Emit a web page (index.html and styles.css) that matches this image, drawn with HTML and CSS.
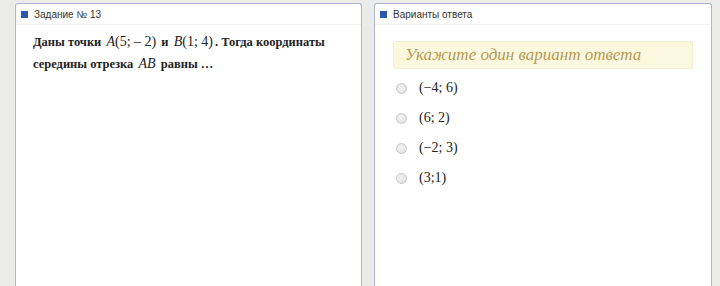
FILE: index.html
```html
<!DOCTYPE html>
<html lang="ru">
<head>
    <meta charset="UTF-8">
    <title>Задание № 13</title>
    <link rel="stylesheet" href="styles.css">
</head>
<body>
    <div class="page">
        <div class="panel panel-task">
            <div class="panel-head"><span class="marker"></span>Задание № 13</div>
            <div class="task-text">
                <p>Даны точки <span class="math"><i>A</i>(5;&nbsp;–&nbsp;2)</span> и <span class="math"><i>B</i>(1;&nbsp;4)</span>. Тогда координаты</p>
                <p>середины отрезка <span class="math"><i>AB</i></span> равны …</p>
            </div>
        </div>
        <div class="panel panel-answers">
            <div class="panel-head"><span class="marker"></span>Варианты ответа</div>
            <div class="answers">
                <div class="hint">Укажите один вариант ответа</div>
                <label class="option"><span class="radio"></span>(−4; 6)</label>
                <label class="option"><span class="radio"></span>(6; 2)</label>
                <label class="option"><span class="radio"></span>(−2; 3)</label>
                <label class="option"><span class="radio"></span>(3;1)</label>
            </div>
        </div>
    </div>
</body>
</html>
```

FILE: styles.css
```css
body {
    margin: 0;
    padding: 0;
    background-color: #ebebea;
    font-family: "Liberation Sans", Arial, sans-serif;
    overflow: hidden;
}

.page {
    display: flex;
    gap: 12px;
    padding: 3px 0 0 15px;
    height: 300px;
}

.panel {
    background-color: #fff;
    border: 1px solid #aeb4d4;
    border-bottom: none;
    border-radius: 3px 3px 0 0;
}

.panel-task {
    width: 345px;
}

.panel-answers {
    width: 336px;
}

.panel-head {
    display: flex;
    align-items: center;
    height: 20px;
    padding-left: 5px;
    font-size: 10px;
    color: #333;
    border-bottom: 1px solid #f1f1f1;
}

.marker {
    width: 7px;
    height: 7px;
    background-color: #2a5aaf;
    margin-right: 6px;
}

.task-text {
    padding: 6px 0 0 17px;
    font-family: "Liberation Serif", "Times New Roman", serif;
    font-weight: bold;
    font-size: 12.5px;
    color: #222;
}

.task-text p {
    margin: 0;
    line-height: 21px;
}

.math {
    font-weight: normal;
    font-size: 14px;
    margin: 0 2px;
}

.answers {
    padding: 16px 18px 0 18px;
    font-family: "Liberation Serif", "Times New Roman", serif;
}

.hint {
    background-color: #fbf8df;
    border: 1px solid #f4efce;
    border-radius: 2px;
    height: 26px;
    line-height: 26px;
    padding-left: 11px;
    font-style: italic;
    font-size: 17px;
    color: #b59a52;
    margin-bottom: 4px;
}

.option {
    display: flex;
    align-items: center;
    height: 30px;
    font-size: 14px;
    color: #222;
}

.radio {
    width: 9px;
    height: 9px;
    border-radius: 50%;
    border: 1px solid #c9c9c9;
    background: radial-gradient(circle at 40% 40%, #f4f4f4, #dcdcdc);
    margin: 0 12px 0 3px;
}
```
